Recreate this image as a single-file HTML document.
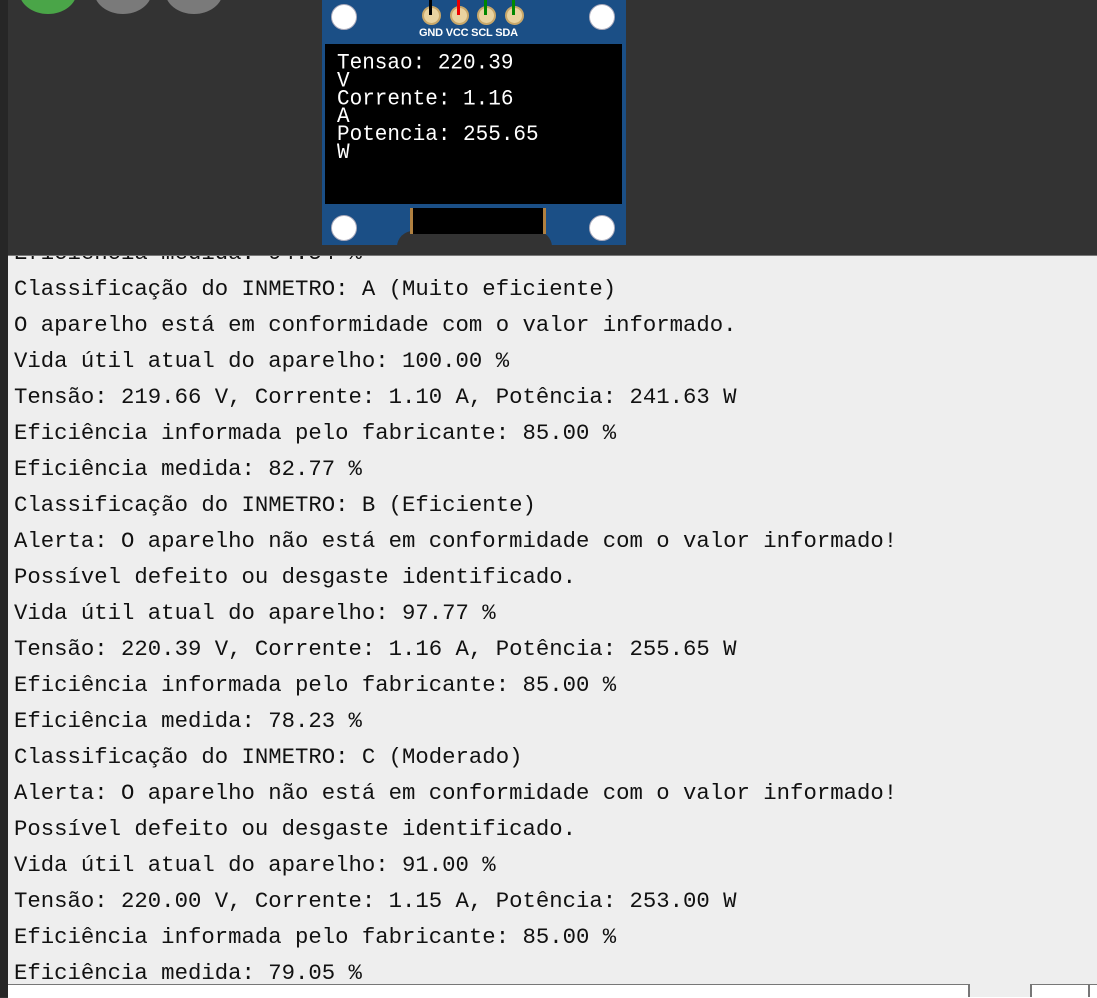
<!DOCTYPE html>
<html><head><meta charset="utf-8"><style>
body{margin:0;width:1097px;height:997px;overflow:hidden;background:#333;position:relative;font-family:"Liberation Sans",sans-serif}
.strip{position:absolute;left:0;top:0;width:8px;height:997px;background:#262626}
.c{position:absolute;border-radius:50%}
.console{position:absolute;left:8px;top:255px;width:1089px;height:729px;background:#eeeeee;overflow:hidden;border-top:1px solid #777}
.inner{position:absolute;left:6px;top:-21.5px;font-family:"Liberation Mono",monospace;font-size:22.3px;line-height:36px;color:#111;white-space:pre}
.input{position:absolute;left:8px;top:984px;width:1089px;height:13px;background:#fff;border-top:1px solid #777}
.oled{position:absolute;left:322px;top:-5px;width:304px;height:250px;background:#1b4f86}
.scr{position:absolute;left:3px;top:49px;width:297px;height:160px;background:#000}
.scr pre{margin:0;position:absolute;left:12px;top:11px;color:#fff;font-family:"Liberation Mono",monospace;font-size:21px;line-height:17px;transform:scaleY(1.05);transform-origin:0 0}
.hole{position:absolute;width:24px;height:24px;border-radius:50%;background:#fff;border:1px solid #aab}
.pin{position:absolute;top:11px;width:15px;height:15px;border-radius:50%;background:#e9d3a0;border:2px solid #c9a86a}
.lbl{position:absolute;top:32px;color:#fff;font-size:11px;font-weight:bold;letter-spacing:-0.2px}
</style></head><body>
<div class="strip"></div>
<div class="c" style="left:19px;top:-32px;width:58px;height:46px;background:#4aa548"></div>
<div class="c" style="left:94px;top:-32px;width:58px;height:46px;background:#7a7a7a"></div>
<div class="c" style="left:165px;top:-32px;width:58px;height:46px;background:#7a7a7a"></div>
<div class="oled">
<div class="hole" style="left:9px;top:9px"></div><div class="hole" style="left:267px;top:9px"></div>
<div class="hole" style="left:9px;top:220px"></div><div class="hole" style="left:267px;top:220px"></div>
<div class="pin" style="left:100px"></div><div class="pin" style="left:128px"></div><div class="pin" style="left:155px"></div><div class="pin" style="left:183px"></div>
<div style="position:absolute;left:107px;top:0;width:3px;height:20px;background:#000"></div>
<div style="position:absolute;left:135px;top:0;width:3px;height:20px;background:#e00"></div>
<div style="position:absolute;left:162px;top:0;width:3px;height:20px;background:#080"></div>
<div style="position:absolute;left:190px;top:0;width:3px;height:20px;background:#080"></div>
<div class="lbl" style="left:97px">GND VCC SCL SDA</div>
<div class="scr"><pre>Tensao: 220.39
V
Corrente: 1.16
A
Potencia: 255.65
W</pre></div>
<div style="position:absolute;left:75px;top:236px;width:155px;height:20px;background:#333;border-radius:16px 16px 0 0"></div>
<div style="position:absolute;left:88px;top:213px;width:130px;height:26px;background:#000;border-left:3px solid #b08040;border-right:3px solid #b08040"></div>
</div>
<div class="console"><div class="inner">Eficiência medida: 94.54 %
Classificação do INMETRO: A (Muito eficiente)
O aparelho está em conformidade com o valor informado.
Vida útil atual do aparelho: 100.00 %
Tensão: 219.66 V, Corrente: 1.10 A, Potência: 241.63 W
Eficiência informada pelo fabricante: 85.00 %
Eficiência medida: 82.77 %
Classificação do INMETRO: B (Eficiente)
Alerta: O aparelho não está em conformidade com o valor informado!
Possível defeito ou desgaste identificado.
Vida útil atual do aparelho: 97.77 %
Tensão: 220.39 V, Corrente: 1.16 A, Potência: 255.65 W
Eficiência informada pelo fabricante: 85.00 %
Eficiência medida: 78.23 %
Classificação do INMETRO: C (Moderado)
Alerta: O aparelho não está em conformidade com o valor informado!
Possível defeito ou desgaste identificado.
Vida útil atual do aparelho: 91.00 %
Tensão: 220.00 V, Corrente: 1.15 A, Potência: 253.00 W
Eficiência informada pelo fabricante: 85.00 %
Eficiência medida: 79.05 %</div></div>
<div class="input"></div>
<div style="position:absolute;left:968px;top:984px;width:60px;height:13px;border-left:2px solid #777;border-right:2px solid #777;background:#eee"></div>
<div style="position:absolute;left:1088px;top:984px;width:2px;height:13px;background:#777"></div>
</body></html>
